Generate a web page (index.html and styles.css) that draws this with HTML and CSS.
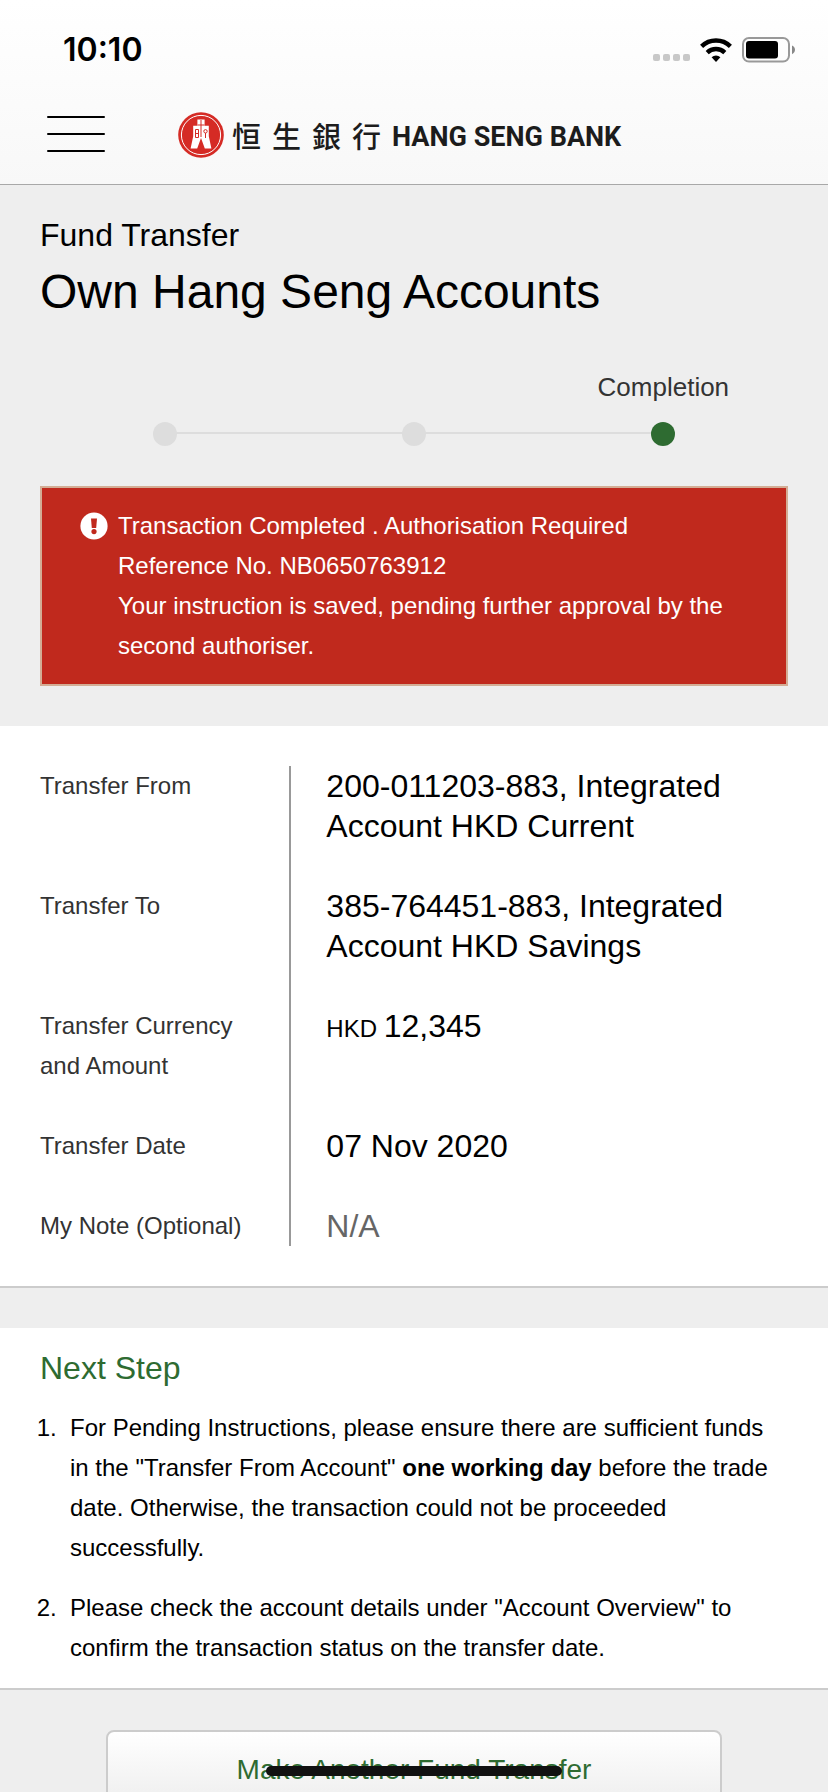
FILE: index.html
```html
<!DOCTYPE html>
<html lang="en">
<head>
<meta charset="utf-8">
<meta name="viewport" content="width=device-width, initial-scale=1">
<title>Fund Transfer</title>
<link rel="stylesheet" href="styles.css">
</head>
<body>
<header class="header">
  <div class="status">
    <span class="clock">10:10</span>
    <div class="status-icons">
      <svg width="37" height="24" viewBox="0 0 37 24" fill="#c8c8c8" aria-hidden="true">
        <rect x="0" y="16" width="7" height="7" rx="2"/><rect x="10" y="16" width="7" height="7" rx="2"/><rect x="20" y="16" width="7" height="7" rx="2"/><rect x="30" y="16" width="7" height="7" rx="2"/>
      </svg>
      <svg width="32" height="24" viewBox="0 0 32 24" aria-hidden="true">
        <g fill="none" stroke="#000" stroke-width="4.4"><path d="M1.6 8.4A20.6 20.6 0 0 1 30.4 8.4"/><path d="M7.2 14.6A12.6 12.6 0 0 1 24.8 14.6"/></g>
        <path d="M11.6 19.2a6.6 6.6 0 0 1 8.8 0L16 24z"/>
      </svg>
      <svg width="54" height="26" viewBox="0 0 54 26" aria-hidden="true">
        <rect x="1" y="1" width="46" height="23.6" rx="6" fill="none" stroke="#999" stroke-width="2"/>
        <rect x="4" y="4" width="32" height="17.4" rx="3"/>
        <path d="M50 8.6c4 1.6 4 7 0 8.6z" fill="#888"/>
      </svg>
    </div>
  </div>
  <div class="nav">
    <button class="menu" type="button" aria-label="Menu"><span></span><span></span><span></span></button>
    <a class="logo" href="#">
      <svg width="46" height="46" viewBox="0 0 46 46" aria-hidden="true">
        <circle cx="23" cy="23" r="22.8" fill="#d52b25"/>
        <circle cx="23" cy="23" r="19.6" fill="none" stroke="#fff" stroke-width="1"/>
        <path d="M19.4 7.5h7.200v6.200h4.200v10.600L33.400 36.500h-6.600L23 26l-3.800 10.500h-6.600l2.600-12.200V13.700h4.200z" fill="#fff"/>
        <path d="M23 8v17M19.500 13h7M17.500 17.500h3v8h-3zM17.500 21.500h3M27.500 21v5" fill="none" stroke="#d52b25" stroke-width="1"/>
        <circle cx="27.500" cy="19.300" r="1.700" fill="none" stroke="#d52b25"/>
      </svg>
      <span class="logo-zh" lang="zh-Hant"><span>恒</span><span>生</span><span>銀</span><span>行</span></span>
      <span class="logo-en">HANG SENG BANK</span>
    </a>
  </div>
</header>
<main class="page">
  <section class="intro">
    <p class="kicker">Fund Transfer</p>
    <h1 class="title">Own Hang Seng Accounts</h1>
    <ol class="steps">
      <li class="step"><span class="dot"></span></li>
      <li class="step"><span class="dot"></span></li>
      <li class="step current" aria-current="step"><span class="step-label">Completion</span><span class="dot"></span></li>
    </ol>
    <div class="alert" role="alert">
      <svg class="alert-icon" width="28" height="28" viewBox="0 0 28 28" aria-hidden="true">
        <circle cx="14" cy="14" r="13.600" fill="#fff"/>
        <path d="M11 6.500h6l-.8 9.500h-4.400z" fill="#c0291d"/><circle cx="14" cy="19.600" r="2.600" fill="#c0291d"/>
      </svg>
      <div>
        <p>Transaction Completed . Authorisation Required</p>
        <p>Reference No. NB0650763912</p>
        <p>Your instruction is saved, pending further approval by the second authoriser.</p>
      </div>
    </div>
  </section>
  <section class="details">
    <dl class="fields">
      <div class="field"><dt>Transfer From</dt><dd>200-011203-883, Integrated Account HKD Current</dd></div>
      <div class="field"><dt>Transfer To</dt><dd>385-764451-883, Integrated Account HKD Savings</dd></div>
      <div class="field"><dt>Transfer Currency and Amount</dt><dd><span class="currency">HKD </span>12,345</dd></div>
      <div class="field"><dt>Transfer Date</dt><dd>07 Nov 2020</dd></div>
      <div class="field"><dt>My Note (Optional)</dt><dd class="empty">N/A</dd></div>
    </dl>
  </section>
  <section class="next">
    <h2 class="next-title">Next Step</h2>
    <ol class="next-list">
      <li>For Pending Instructions, please ensure there are sufficient funds in the "Transfer From Account" <strong>one working day</strong> before the trade date. Otherwise, the transaction could not be proceeded successfully.</li>
      <li>Please check the account details under "Account Overview" to confirm the transaction status on the transfer date.</li>
    </ol>
  </section>
  <div class="actions">
    <button class="action" type="button">Make Another Fund Transfer</button>
  </div>
</main>
<div class="home-indicator"></div>
</body>
</html>
```
FILE: styles.css
```css
* {
  box-sizing: border-box;
}
body,
p,
h1,
h2,
ol,
dl,
dd {
  margin: 0;
  padding: 0;
}
body {
  display: flex;
  flex-direction: column;
  height: 100vh;
  background: #eee;
  color: #000;
  font-family: "Liberation Sans", Arial, sans-serif;
  font-size: 24px;
  line-height: 40px;
}
h1,
h2 {
  font-weight: 400;
}
svg {
  display: block;
  flex: none;
}

.header {
  flex: none;
  border-bottom: 1px solid #a8a8a8;
  background: linear-gradient(#fff, #f8f8f8);
}
.status {
  display: flex;
  align-items: center;
  justify-content: space-between;
  height: 100px;
  padding: 0 32px 0 63px;
}
.clock {
  font-family: Inter, sans-serif;
  font-size: 32px;
  font-weight: 600;
}
.status-icons {
  display: flex;
  align-items: center;
  gap: 10px;
}
.nav {
  display: flex;
  align-items: center;
  height: 84px;
  padding: 0 47px 14px;
  gap: 73px;
}
.menu {
  display: flex;
  flex-direction: column;
  gap: 15px;
  width: 58px;
  padding: 0 0 2px;
  border: 0;
  background: none;
}
.menu span {
  height: 2px;
  border-radius: 1px;
  background: #000;
}
.logo {
  display: flex;
  align-items: center;
  color: #1c1c1c;
  text-decoration: none;
  white-space: nowrap;
}
.logo-zh {
  display: flex;
  gap: 11px;
  margin-left: 8px;
  font-family: "Noto Sans CJK TC", sans-serif;
  font-size: 29px;
  font-weight: 500;
}
.logo-en {
  margin-left: 11px;
  padding-top: 4px;
  font-family: Roboto, sans-serif;
  font-size: 27px;
  font-weight: 700;
}

.page {
  flex: 1;
  overflow-y: auto;
  scrollbar-width: none;
}
.intro {
  padding: 30px 40px 40px;
}
.kicker {
  font-size: 32px;
}
.title {
  margin-top: 8px;
  font-size: 48px;
  line-height: 58px;
}
.steps {
  display: grid;
  grid-template-columns: repeat(3, 1fr);
  align-items: end;
  margin-top: 46px;
  list-style: none;
}
.step {
  position: relative;
  display: flex;
  flex-direction: column;
  align-items: center;
  gap: 15px;
}
.step + .step::before {
  content: "";
  position: absolute;
  right: 50%;
  bottom: 12px;
  width: 100%;
  height: 2px;
  background: #ddd;
}
.step-label {
  color: #333;
  font-size: 26px;
}
.dot {
  position: relative;
  z-index: 1;
  width: 24px;
  height: 24px;
  border-radius: 50%;
  background: #ddd;
}
.current .dot {
  background: #2e6b31;
}
.alert {
  display: flex;
  gap: 10px;
  margin-top: 40px;
  padding: 18px 38px;
  border: 2px solid #d3ad95;
  background: #c0291d;
  color: #fff;
}
.alert-icon {
  margin-top: 6px;
}

.details {
  padding: 40px;
  border-bottom: 2px solid #ccc;
  background: #fff;
}
.fields {
  display: flex;
  flex-direction: column;
  gap: 40px;
  background: linear-gradient(#999, #999) 33.4% 0 / 2px 100% no-repeat;
}
.field {
  display: grid;
  grid-template-columns: 1fr 2fr;
}
.field dt {
  padding-right: 40px;
  color: #333;
}
.field dd {
  padding-left: 37px;
  font-size: 32px;
}
.currency {
  font-size: 24px;
}
.field .empty {
  color: #666;
}

.next {
  margin-top: 40px;
  padding: 20px 40px;
  border-bottom: 2px solid #ccc;
  background: #fff;
}
.next-title {
  color: #2e6b31;
  font-size: 32px;
}
.next-list {
  display: grid;
  gap: 20px;
  margin-top: 20px;
  padding-left: 30px;
}
.next-list li::marker {
  content: counter(list-item) ".\00a0\00a0";
}

.actions {
  padding: 40px 106px;
}
.action {
  display: block;
  width: 100%;
  height: 80px;
  border: 2px solid #ccc;
  border-radius: 8px;
  background: linear-gradient(#fff, #ededed);
  color: #2e6b31;
  font: inherit;
  font-size: 28px;
}
.home-indicator {
  position: fixed;
  bottom: 16px;
  left: 50%;
  width: 296px;
  height: 10px;
  margin-left: -148px;
  border-radius: 5px;
  background: #111;
}
```
